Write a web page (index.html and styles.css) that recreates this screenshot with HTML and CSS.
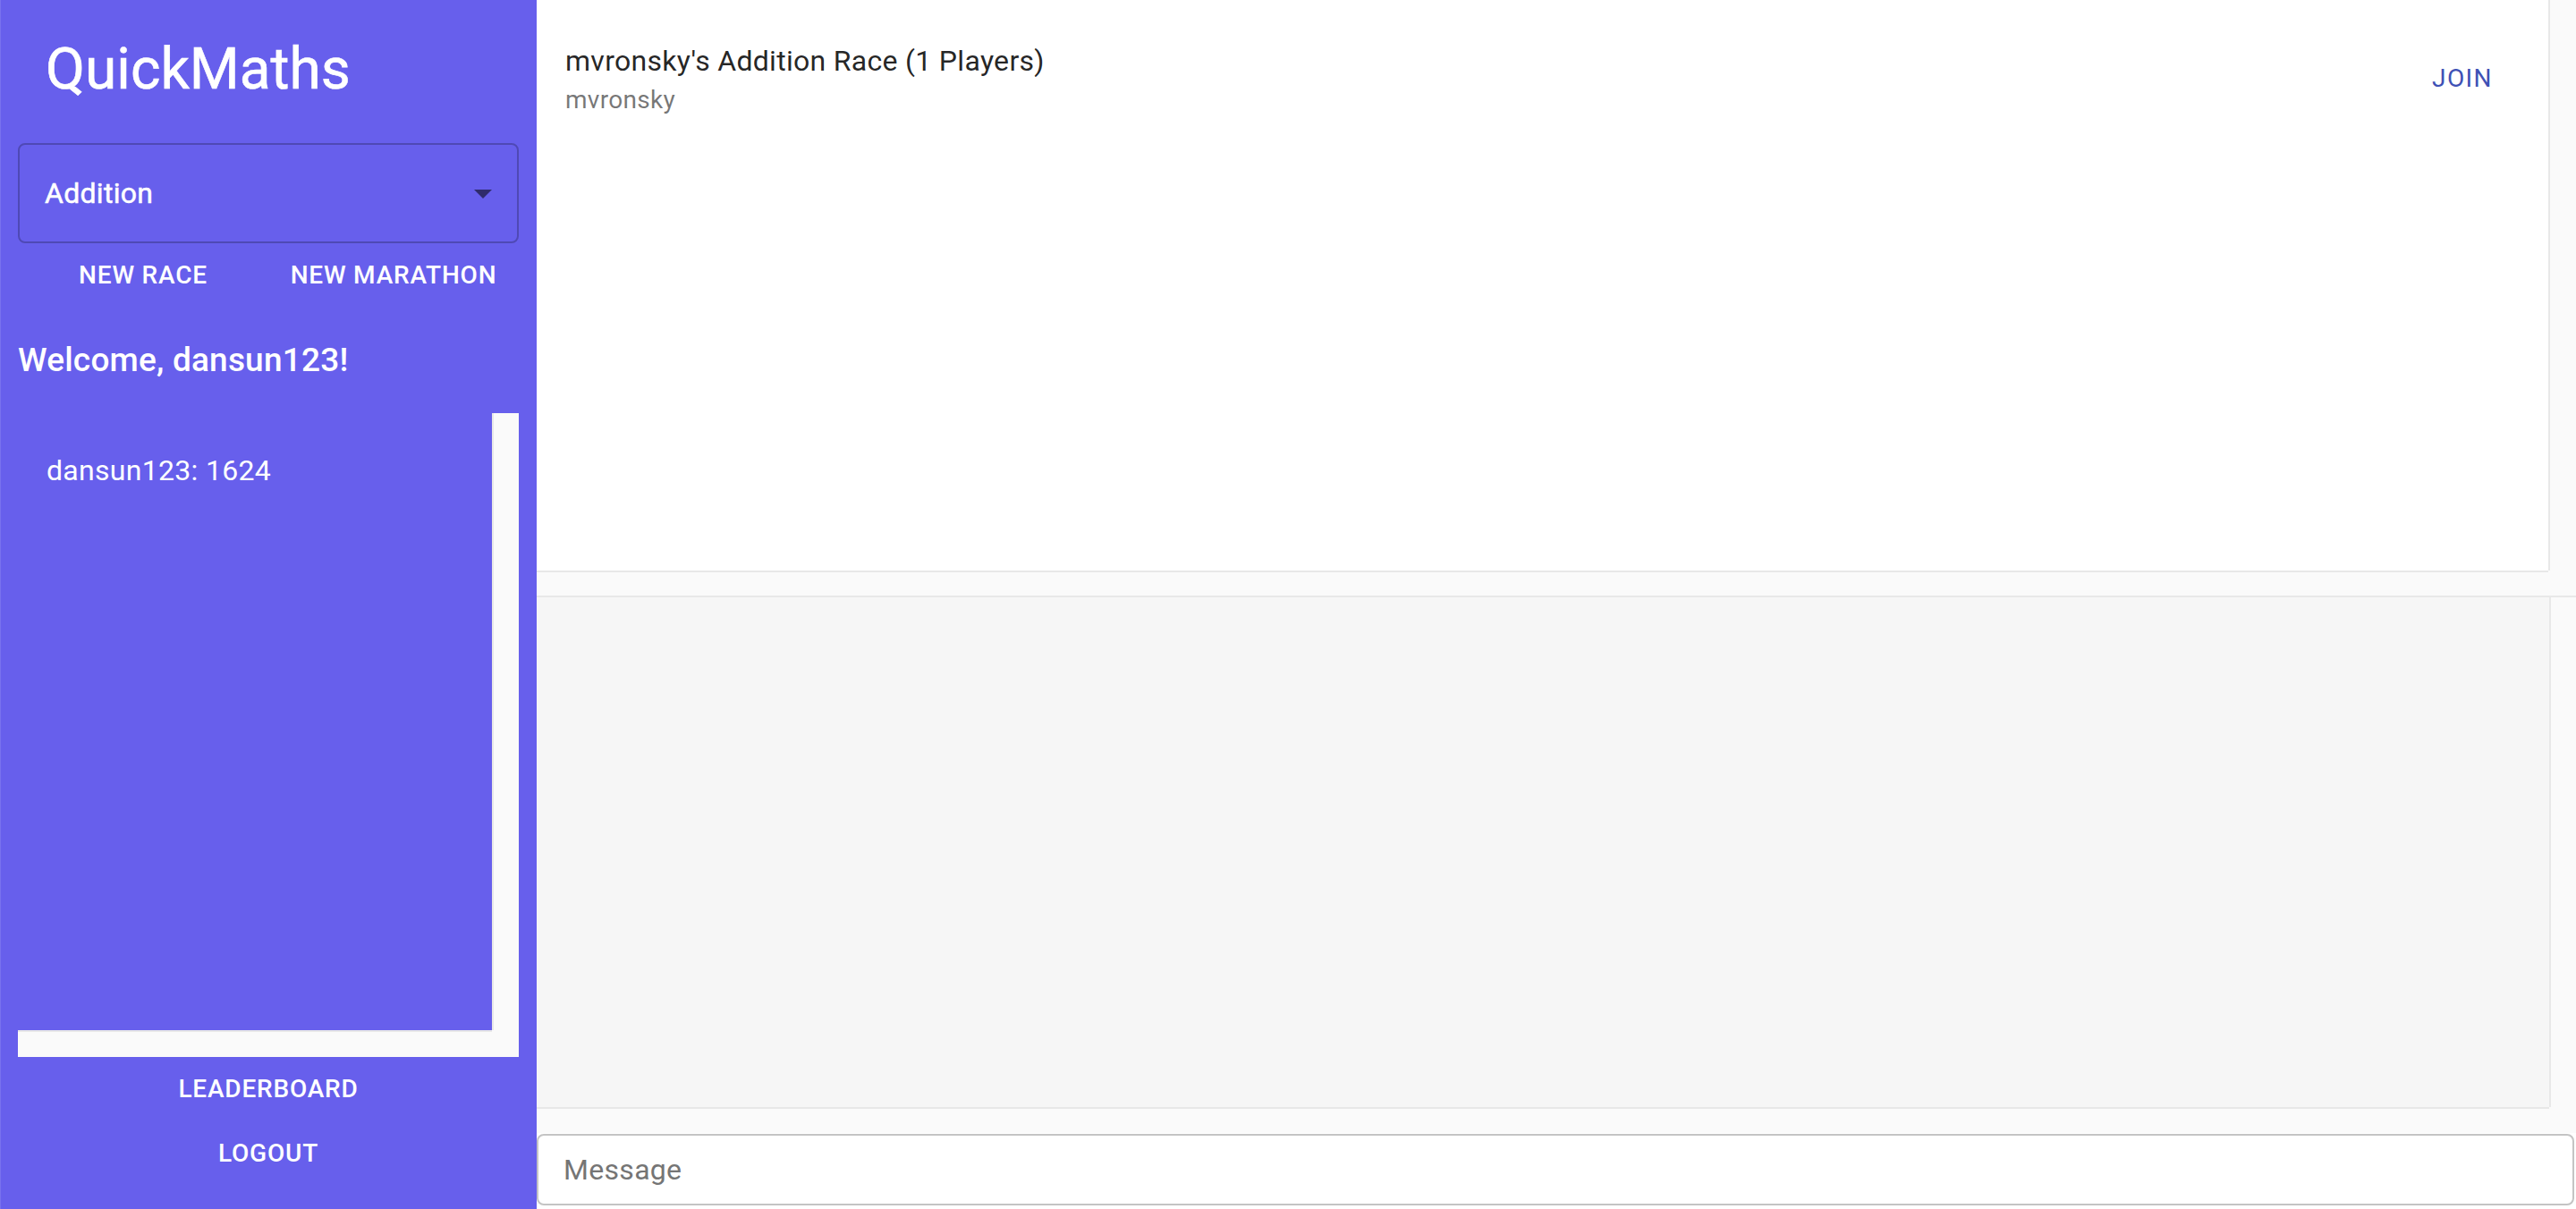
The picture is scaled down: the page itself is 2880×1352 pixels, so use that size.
FILE: index.html
```html
<!DOCTYPE html>
<html lang="en">
<head>
<meta charset="utf-8">
<title>QuickMaths</title>
<link rel="stylesheet" href="styles.css">
</head>
<body>
<div class="app">
  <aside class="sidebar">
    <h1 class="brand">QuickMaths</h1>
    <div class="select">
      <span class="select-value">Addition</span>
      <svg class="select-arrow" viewBox="0 0 24 24" aria-hidden="true"><path d="M7 10l5 5 5-5z"/></svg>
    </div>
    <div class="actions">
      <div class="cell"><button class="btn btn-light">New Race</button></div>
      <div class="cell"><button class="btn btn-light">New Marathon</button></div>
    </div>
    <h2 class="welcome">Welcome, dansun123!</h2>
    <div class="pane board">
      <div class="pane-body">
        <ul class="list">
          <li class="item"><span class="item-text">dansun123: 1624</span></li>
        </ul>
      </div>
      <div class="track track-v"></div>
      <div class="track track-h"></div>
      <div class="track track-corner"></div>
    </div>
    <div class="nav">
      <button class="btn btn-light">Leaderboard</button>
      <button class="btn btn-light">Logout</button>
    </div>
  </aside>
  <main class="main">
    <div class="pane games">
      <div class="pane-body">
        <ul class="list">
          <li class="game">
            <div class="game-text">
              <div class="primary">mvronsky's Addition Race (1 Players)</div>
              <div class="secondary">mvronsky</div>
            </div>
            <button class="btn btn-primary">Join</button>
          </li>
        </ul>
      </div>
      <div class="track track-v"></div>
      <div class="track track-h"></div>
      <div class="track track-corner"></div>
    </div>
    <div class="pane chat">
      <div class="pane-body chat-body"></div>
      <div class="track track-v"></div>
      <div class="track track-h"></div>
      <div class="track track-corner"></div>
    </div>
    <input class="message" type="text" placeholder="Message">
  </main>
</div>
</body>
</html>
```
FILE: styles.css
```css
* { box-sizing: border-box; }
html, body { margin: 0; padding: 0; }
body {
  width: 2880px;
  height: 1352px;
  overflow: hidden;
  background: #fff;
  font-family: Roboto, "Helvetica Neue", Arial, sans-serif;
}
.app { display: flex; height: 1352px; }

/* ---------- sidebar ---------- */
.sidebar {
  width: 600px;
  flex: none;
  background: #675fec;
  padding: 0 20px;
  display: flex;
  flex-direction: column;
  box-shadow: inset 1px 0 0 rgba(255,255,255,0.12);
}
.brand {
  margin: 0;
  padding: 39px 0 0 31px;
  font-size: 64px;
  font-weight: 400;
  line-height: 78px;
  color: #fff;
  -webkit-text-stroke: 0.6px #fff;
}
.select {
  margin-top: 43px;
  height: 112px;
  flex: none;
  border: 2px solid rgba(0,0,0,0.23);
  border-radius: 8px;
  display: flex;
  align-items: center;
  justify-content: space-between;
  padding: 0 14px 0 28px;
}
.select-value {
  color: #fff;
  font-size: 32px;
  font-weight: 400;
  letter-spacing: 0.3px;
  -webkit-text-stroke: 0.5px #fff;
}
.select-arrow {
  width: 48px;
  height: 48px;
  fill: rgba(0,0,0,0.54);
}
.actions {
  display: grid;
  grid-template-columns: 1fr 1fr;
}
.cell { display: flex; justify-content: center; }
.btn {
  font-family: inherit;
  font-size: 28px;
  font-weight: 500;
  letter-spacing: 0.8px;
  text-transform: uppercase;
  height: 72px;
  min-width: 128px;
  padding: 0 16px;
  border: 0;
  background: transparent;
  border-radius: 8px;
  line-height: 1;
  cursor: pointer;
}
.btn-light { color: #fff; }
.btn-primary { color: #3f51b5; flex: none; font-weight: 400; letter-spacing: 1.4px; }
.welcome {
  margin: 27px 0 0;
  font-size: 37px;
  font-weight: 500;
  line-height: 64px;
  letter-spacing: 0.2px;
  color: #fff;
}

/* ---------- scroll panes with always-visible tracks ---------- */
.pane {
  display: grid;
  grid-template-columns: minmax(0, 1fr) 30px;
  grid-template-rows: minmax(0, 1fr) 30px;
  flex: none;
}
.pane-body { overflow: hidden; min-width: 0; min-height: 0; }
.track { background: #fafafa; }
.track-v { border-left: 2px solid #e8e8e8; }
.track-h { border-top: 2px solid #e8e8e8; }

.board {
  margin-top: 27px;
  height: 720px;
}
.list { list-style: none; margin: 0; padding: 16px 0; }
.item { padding: 16px 32px; }
.item-text {
  display: block;
  margin: 8px 0;
  font-size: 32px;
  line-height: 48px;
  letter-spacing: 0.3px;
  color: #fff;
  white-space: nowrap;
}
.nav {
  display: flex;
  flex-direction: column;
  align-items: center;
}

/* ---------- main ---------- */
.main {
  flex: 1;
  min-width: 0;
  display: flex;
  flex-direction: column;
}
.games {
  height: 666px;
  grid-template-columns: minmax(0, 1fr) 31px;
  grid-template-rows: minmax(0, 1fr) 28px;
  background: #fff;
}
.game {
  display: flex;
  align-items: center;
  padding: 16px 32px;
}
.game-text { flex: 1; margin: 12px 0; }
.primary {
  font-size: 32px;
  line-height: 48px;
  letter-spacing: 0.3px;
  color: rgba(0,0,0,0.87);
}
.secondary {
  font-size: 28px;
  line-height: 40px;
  letter-spacing: 0.3px;
  color: rgba(0,0,0,0.54);
}
.chat {
  height: 601px;
  border-top: 2px solid #e8e8e8;
  grid-template-rows: minmax(0, 1fr) 29px;
}
.chat-body { background: #f6f6f6; }
.message {
  display: block;
  margin: 1px 2px 4px 0;
  height: 80px;
  border: 2px solid #c4c4c4;
  border-radius: 8px;
  padding: 0 28px;
  font-family: inherit;
  font-size: 32px;
  letter-spacing: 0.3px;
  color: rgba(0,0,0,0.87);
  background: #fff;
  outline: none;
}
.message::placeholder { color: #757575; opacity: 1; }
```
